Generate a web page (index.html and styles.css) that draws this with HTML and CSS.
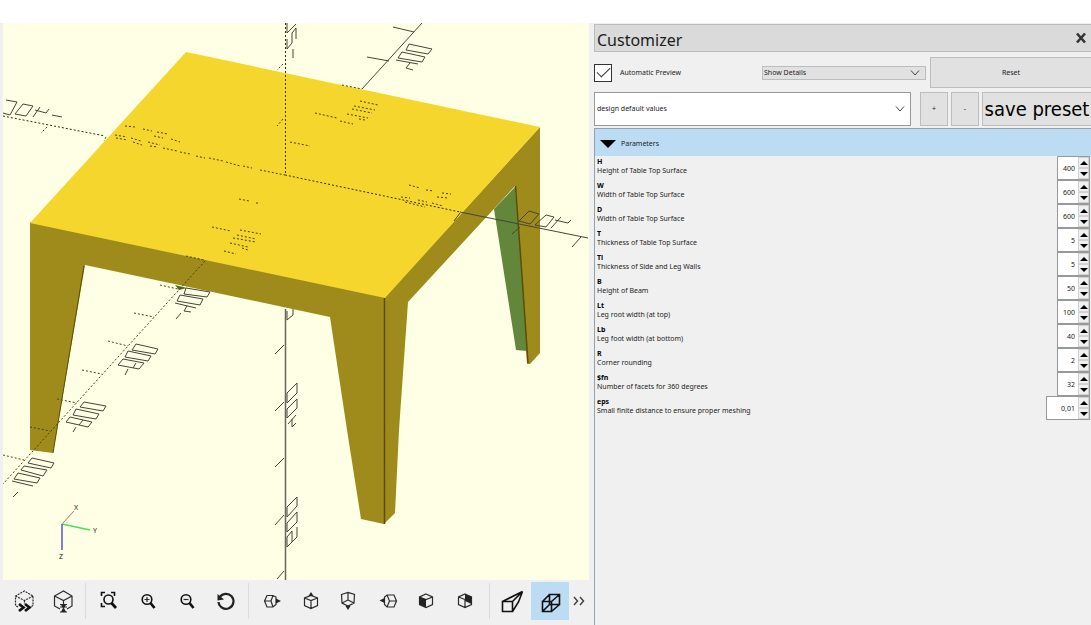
FILE: index.html
```
<!DOCTYPE html>
<html lang="en">
<head>
<meta charset="utf-8">
<title>Customizer</title>
<link rel="stylesheet" href="styles.css">
</head>
<body>
<main class="window">
  <section class="viewer" aria-label="3D view">
    <svg class="scene" viewBox="3 23 586 557" preserveAspectRatio="xMinYMin slice" role="img" aria-label="Table model">
      <rect class="sky" x="3" y="23" width="2000" height="2000"/>
      <!-- table faces -->
      <path class="olive" d="M30 222 385 297 540 127V353L530 364H527L515 186 408 302 399 430 395 513 384 524 361 519 347 430 330 317 85 265 53 453 30 450Z"/>
      <path class="green" d="M494 209 515 187 522 269 527 351 516 350Z"/>
      <path class="yellow" d="M186 52 540 127 385 298 30 223Z"/>
      <path class="edge" d="M384.500 298V524M515.500 186 521.500 269 528 363"/>
      <path class="edge thin" d="M84 266 53 453"/>
      <path class="spot" d="M175 285 187 288 179 290Z"/>
      <!-- axes -->
      <path class="axis" d="M285.500 309V580"/>
      <path class="line" d="M422 23 362 89M460 212 588 238"/>
      <path class="dots strong" d="M285.500 23V175M3 116 105 136M285 175 460 212"/>
      <path class="dots" d="M205 261 3 484M186 256 204 260M160 285 178 289M134 313 154 317M108 341 128 346M82 370 102 374M57 399 77 403M30 427 50 431M3 455 24 460M283 64 277 70M283 119 277 126M47 127 41 133M106 137 104 141"/>
      <!-- hidden scale marks on the table top -->
      <path class="dots" d="M125 126 135 127M143 129 152 131M157 132 168 134M154 136 163 138M171 139 180 142M115 135 127 137M131 138 141 141M148 142 160 145M116 138 127 140M133 142 142 145M150 146 158 147M163 148 177 151M180 152 190 154M196 156 205 158M209 158 223 161M226 162 240 166M243 166 252 168M260 170 285 175M239 199 249 201M256 203 258 203"/>
      <path class="dots" d="M342 85 362 89M360 101 378 105M354 106 375 110M352 109 372 113M347 114 368 118M359 119 365 120M315 113 337 118M340 121 353 124M290 142 310 146M409 185 420 188M426 190 434 191M442 193 451 194M437 197 448 198M401 197 410 198M418 200 427 202M432 203 443 206M405 202 425 207"/>
      <path class="dots" d="M212 227 231 231M240 230 261 234M237 235 256 239M233 238 256 242M230 243 248 247M242 248 248 250M224 251 236 254"/>
      <!-- scale ticks -->
      <path class="line" d="M393 27 414 32M367 57 389 61M520 227 512 234M581 237 572 247M460 213 454 221M284 345 275 354M284 402 275 411M284 458 275 467M284 515 275 525M284 571 277 579"/>
      <!-- scale marks -->
      <path class="line" d="M409 44 432 49 428 54 406 50ZM402 52 425 57 422 62 398 58ZM396 60 418 64M410 63 406 68 413 70"/>
      <path class="line" d="M529 211 539 214 530 224 519 221ZM546 215 554 217 546 227 535 225ZM561 217 551 228M555 220 568 223 571 220"/>
      <path class="line" d="M287 23V33L296 24M287 39V49L292 43V33L296 28V39M293 49V58"/>
      <path class="line" d="M6 100 17 102 10 115 3 113M23 104 33 106 26 116 15 114ZM40 107 33 117M35 110 46 113 49 109M52 115 62 117"/>
      <path class="line" d="M186 288 210 292 207 297 184 294ZM180 295 203 299 200 305 177 301ZM175 303 196 308M187 306 184 311 191 312M181 313 176 319"/>
      <path class="line" d="M136 344 158 349 155 354 132 350ZM128 351 151 356 148 361 125 357ZM123 359 144 363 139 369 118 365ZM136 363 133 368M128 369 125 375"/>
      <path class="line" d="M84 402 106 406 103 411 80 407ZM76 409 99 414 96 419 73 415ZM70 417 92 422 88 427 66 422ZM83 420 79 425M76 427 73 432"/>
      <path class="line" d="M32 458 54 463 51 468 28 463ZM24 466 47 470 43 476 21 470ZM18 473 40 478 37 483 14 479ZM12 481 33 486M18 492 13 497"/>
      <path class="line" d="M287 311V320L293 315V309M297 383V393L287 403V393ZM297 399V408L287 418V409ZM296 415 288 424M292 419V427L296 423"/>
      <path class="line" d="M297 497V506L287 517V507ZM297 512V522L287 532V523ZM287 537 292 531V542L287 547ZM292 542 297 537V527"/>
      <!-- orientation marker -->
      <path class="mx" d="M62 524 74 511"/>
      <path class="my" d="M62 524 90 530"/>
      <path class="mz" d="M62 524V550"/>
      <text class="mark" x="76" y="510">X</text>
      <text class="mark" x="95" y="533">Y</text>
      <text class="mark" x="61" y="559">Z</text>
    </svg>
    <div class="toolbar" role="toolbar" aria-label="View tools">
      <button class="tool" aria-label="Preview"><svg viewBox="0 0 26 26"><path stroke-dasharray="2 1" d="M7 19 4.500 17.500V8L13.500 3 22 8V17.500L19 19.500M4.500 8 13.500 12.500 22 8M13.500 12.500V16"/><path class="heavy" d="M8 16 12.500 19.500 8 23M14 16 18.500 19.500 14 23"/></svg></button>
      <button class="tool" aria-label="Render"><svg viewBox="0 0 26 26"><path d="M10 21 4.500 18V8L13.500 3 22 8V18L17 21M4.500 8 13.500 12.500 22 8M13.500 12.500V17"/><path d="M10 16.500H17M10 19H17M10 24H17"/><path class="fill" d="M11 17H16L14 20 16 24H11L13 20Z"/></svg></button>
      <span class="sep"></span>
      <button class="tool" aria-label="View all"><svg viewBox="0 0 26 26"><path class="bold" d="M5.500 8V4.500H9M15 4.500H18.500V8M5.500 15V18.500H9"/><circle class="bold" cx="12.500" cy="11.500" r="4.500"/><path class="heavy" d="M15.500 15 20 20"/></svg></button>
      <button class="tool" aria-label="Zoom in"><svg viewBox="0 0 26 26"><circle class="bold" cx="12" cy="11.500" r="4.800"/><path d="M9.500 11.500H14.500M12 9V14"/><path class="heavy" d="M15.500 15 19.500 20"/></svg></button>
      <button class="tool" aria-label="Zoom out"><svg viewBox="0 0 26 26"><circle class="bold" cx="12" cy="11.500" r="4.800"/><path d="M9.500 11.500H14.500"/><path class="heavy" d="M15.500 15 19.500 20"/></svg></button>
      <button class="tool" aria-label="Reset view"><svg viewBox="0 0 26 26"><path class="reset" d="M6.500 9.500A7.500 7.500 0 1 1 5.500 14"/><path class="fill" d="M4.500 6V12.500L11 11.500Z"/></svg></button>
      <span class="sep"></span>
      <button class="tool" aria-label="Right view"><svg viewBox="0 0 26 26"><path d="M5.500 13 8 7.500H14L17 9V16.500L14 19H8ZM5.500 13H12L14 7.500M12 13 14 19"/><path class="fill" d="M17 10.500 22 13 17 15.500Z"/></svg></button>
      <button class="tool" aria-label="Top view"><svg viewBox="0 0 26 26"><path d="M13 7.500 19.500 10V17.500L13 20.500 6.500 17.500V10ZM6.500 10 13 12.500 19.500 10M13 12.500V20.500"/><path class="fill" d="M10.500 8 13 4 15.500 8Z"/></svg></button>
      <button class="tool left" aria-label="Bottom view"><svg viewBox="0 0 26 26"><path d="M6.500 6.500 13 4.500 19.500 6.500 19 15 13 18 7 15ZM13 4.500V12L7 15M13 12 19 15"/><path class="fill" d="M10.500 18H15.500L13 22Z"/></svg></button>
      <button class="tool" aria-label="Left view"><svg viewBox="0 0 26 26"><path d="M20.500 13 18 7H11L8.500 9V16.500L11 19H18ZM20.500 13H13.500L11 7M13.500 13 11 19"/><path class="fill" d="M8.500 10 3.500 12.500 8.500 15Z"/></svg></button>
      <button class="tool left" aria-label="Front view"><svg viewBox="0 0 26 26"><path d="M13 6 19.500 9V16.500L13 19.500 6.500 16.500V9ZM6.500 9 13 11.500 19.500 9"/><path class="fill" d="M6.500 9 13 11.500V19.500L6.500 16.500Z"/></svg></button>
      <button class="tool left" aria-label="Back view"><svg viewBox="0 0 26 26"><path d="M13 6 19.500 9V16.500L13 19.500 6.500 16.500V9ZM6.500 9 13 11.500M13 19.500V11.500"/><path class="fill" d="M13 6 19.500 9V16L13 13Z"/></svg></button>
      <span class="sep"></span>
      <button class="tool wide" aria-label="Perspective"><svg viewBox="0 0 26 26"><path class="bold" d="M3.500 13.500H13.500V23.500H3.500ZM3.500 13.500 23.500 3.500 13.500 13.500M13.500 23.500 19.500 14 23.500 3.500"/></svg></button>
      <button class="tool wide on" aria-label="Orthogonal" aria-pressed="true"><svg viewBox="0 0 26 26"><path class="bold" d="M5.500 13.500H14.500V23.500H5.500ZM12.500 6.500H22.500V16.500H12.500ZM5.500 13.500 12.500 6.500M14.500 13.500 22.500 6.500M5.500 23.500 12.500 16.500M14.500 23.500 22.500 16.500"/></svg></button>
      <button class="more" aria-label="More tools"><svg viewBox="0 0 12 12"><path d="M1 2 4.500 6 1 10M7 2 10.500 6 7 10"/></svg></button>
    </div>
  </section>
  <section class="panel">
    <header class="title"><h1>Customizer</h1><button class="close" aria-label="Close"><svg viewBox="0 0 12 12"><path d="M2 1.500 10 10.500M10 1.500 2 10.500"/></svg></button></header>
    <div class="options">
      <label class="auto"><input type="checkbox" checked><span>Automatic Preview</span></label>
      <span class="drop small"><select aria-label="Detail level"><option>Show Details</option></select><svg viewBox="0 0 12 8"><path d="M2 1.500 6 6 10 1.500"/></svg></span>
      <button class="btn">Reset</button>
    </div>
    <div class="presets">
      <span class="drop big"><select aria-label="Preset"><option>design default values</option></select><svg viewBox="0 0 12 8"><path d="M2 1.500 6 6 10 1.500"/></svg></span>
      <button class="btn sq" aria-label="Add preset">+</button>
      <button class="btn sq" aria-label="Remove preset">-</button>
      <button class="btn save">save preset</button>
    </div>
    <div class="params">
      <button class="group" aria-expanded="true"><svg viewBox="0 0 16 8"><path d="M0 0H16L8 8Z"/></svg>Parameters</button>
      <div class="row"><label for="h"><b>H</b>Height of Table Top Surface</label><span class="spin"><input id="h" value="400"><span class="steps"><button aria-label="Increase H"></button><button aria-label="Decrease H"></button></span></span></div>
      <div class="row"><label for="w"><b>W</b>Width of Table Top Surface</label><span class="spin"><input id="w" value="600"><span class="steps"><button aria-label="Increase W"></button><button aria-label="Decrease W"></button></span></span></div>
      <div class="row"><label for="d"><b>D</b>Width of Table Top Surface</label><span class="spin"><input id="d" value="600"><span class="steps"><button aria-label="Increase D"></button><button aria-label="Decrease D"></button></span></span></div>
      <div class="row"><label for="t"><b>T</b>Thickness of Table Top Surface</label><span class="spin"><input id="t" value="5"><span class="steps"><button aria-label="Increase T"></button><button aria-label="Decrease T"></button></span></span></div>
      <div class="row"><label for="tl"><b>Tl</b>Thickness of Side and Leg Walls</label><span class="spin"><input id="tl" value="5"><span class="steps"><button aria-label="Increase Tl"></button><button aria-label="Decrease Tl"></button></span></span></div>
      <div class="row"><label for="b"><b>B</b>Height of Beam</label><span class="spin"><input id="b" value="50"><span class="steps"><button aria-label="Increase B"></button><button aria-label="Decrease B"></button></span></span></div>
      <div class="row"><label for="lt"><b>Lt</b>Leg root width (at top)</label><span class="spin"><input id="lt" value="100"><span class="steps"><button aria-label="Increase Lt"></button><button aria-label="Decrease Lt"></button></span></span></div>
      <div class="row"><label for="lb"><b>Lb</b>Leg foot width (at bottom)</label><span class="spin"><input id="lb" value="40"><span class="steps"><button aria-label="Increase Lb"></button><button aria-label="Decrease Lb"></button></span></span></div>
      <div class="row"><label for="r"><b>R</b>Corner rounding</label><span class="spin"><input id="r" value="2"><span class="steps"><button aria-label="Increase R"></button><button aria-label="Decrease R"></button></span></span></div>
      <div class="row"><label for="fn"><b>$fn</b>Number of facets for 360 degrees</label><span class="spin"><input id="fn" value="32"><span class="steps"><button aria-label="Increase $fn"></button><button aria-label="Decrease $fn"></button></span></span></div>
      <div class="row"><label for="eps"><b>eps</b>Small finite distance to ensure proper meshing</label><span class="spin long"><input id="eps" value="0,01"><span class="steps"><button aria-label="Increase eps"></button><button aria-label="Decrease eps"></button></span></span></div>
    </div>
  </section>
</main>
</body>
</html>
```
FILE: styles.css
```
* { box-sizing: border-box; }
body {
  margin: 0;
  background: #fff;
  color: #1c1c1c;
  font: 7px/10px "Noto Sans", "Open Sans", sans-serif;
}
button, input, select { font: inherit; color: inherit; margin: 0; padding: 0; border-radius: 0; }
.window {
  display: grid;
  grid-template-columns: minmax(0, 589fr) minmax(0, 502fr);
  min-height: 100vh;
  padding-top: 23px;
  background: linear-gradient(#fff 23px, #f0f0f0 23px);
}

/* 3D view */
.viewer { display: flex; flex-direction: column; padding-left: 3px; }
.scene { display: block; flex: 1 1 0; min-height: 0; width: 100%; }
.scene path { fill: none; }
.sky { fill: #ffffe5; }
.scene .yellow { fill: #f4d62c; }
.scene .olive { fill: #9e8b1c; }
.scene .green { fill: #62863a; }
.scene .spot { fill: #4c6b22; }
.edge { stroke: #5d4d08; stroke-width: 1.5; }
.thin { stroke-width: 1; }
.axis { stroke: #66665c; stroke-width: 1.5; }
.line { stroke: #45453a; stroke-width: 1; }
.dots { stroke: #4a4210; stroke-width: 1; stroke-dasharray: 2 2; }
.strong { stroke: #332d08; }
.mx { stroke: #c07060; }
.my { stroke: #4be05a; stroke-width: 1.5; }
.mz { stroke: #5a50d8; stroke-width: 1.5; }
.mark { font-size: 7px; text-anchor: middle; fill: #222; }

/* toolbar */
.toolbar { display: flex; align-items: center; height: 45px; padding: 0 0 4px 1px; }
.tool, .more { display: grid; place-items: center; flex: none; width: 39px; height: 38px; border: 0; background: none; }
.tool svg { width: 26px; height: 26px; fill: none; stroke: #2b2b2b; stroke-width: 1.2; }
.tool.left { justify-content: start; padding-left: 5px; }
.tool.wide { width: 38px; }
.tool.on { background: #bcdcf4; }
.tool .bold { stroke: #111; stroke-width: 1.6; }
.tool .heavy { stroke: #111; stroke-width: 2.7; }
.tool .reset { stroke: #222; stroke-width: 2.2; }
.tool .fill { fill: #222; stroke: none; }
.sep { flex: none; width: 1px; height: 36px; margin: 0 3px; background: #dcdcdc; }
.more { width: 20px; }
.more svg { width: 12px; height: 12px; fill: none; stroke: #444; stroke-width: 1.5; }

/* panel */
.panel { padding: 1px 0 0 5px; min-width: 0; }
.title {
  display: flex;
  align-items: center;
  justify-content: space-between;
  height: 28px;
  padding: 0 4px 0 2px;
  border: 1px solid #bdbdbd;
  border-right: 0;
  background: #dadada;
}
.title h1 { margin: 0; padding-top: 3px; font-size: 16px; line-height: 24px; font-weight: 400; }
.close { display: grid; place-items: center; width: 12px; height: 12px; border: 0; background: none; }
.close svg { width: 12px; height: 12px; stroke: #333; stroke-width: 2.6; }
.options {
  display: grid;
  grid-template-columns: 164fr 164fr 161fr;
  gap: 4px;
  align-items: center;
  height: 31px;
  margin-top: 5px;
}
.auto { display: flex; align-items: center; gap: 8px; }
.auto input {
  appearance: none;
  width: 18px;
  height: 18px;
  border: 1px solid #333;
  outline: 0;
  background: #fff;
  display: grid;
  place-items: center;
}
.auto input:checked::before {
  content: "";
  width: 12px;
  height: 6px;
  margin-bottom: 5px;
  border: solid #333;
  border-width: 0 0 1px 1px;
  transform: rotate(-45deg);
}
.drop { display: grid; grid-template-columns: minmax(0, 1fr); align-items: center; min-width: 0; }
.drop select { grid-area: 1 / 1; appearance: none; width: 100%; padding: 0 1px; border: 1px solid #bdbdbd; background: #e1e1e1; }
.drop svg { grid-area: 1 / 1; justify-self: end; width: 12px; height: 8px; margin-right: 5px; fill: none; stroke: #444; pointer-events: none; }
.small select { height: 14px; }
.big { flex: 1; }
.drop.big select { height: 34px; padding: 0 2px; background: #fff; border-color: #999; }
.btn { border: 1px solid #bdbdbd; background: #e1e1e1; text-align: center; }
.options .btn { height: 31px; border-right: 0; }
.presets { display: flex; margin-top: 4px; gap: 3px; }
.sq { flex: none; width: 28px; height: 34px; }
.big + .sq { margin-left: 6px; }
.save {
  flex: none;
  width: 109px;
  height: 34px;
  border-right: 0;
  font-family: "DejaVu Sans Condensed", "DejaVu Sans", sans-serif;
  font-size: 20px;
  white-space: nowrap;
  color: #000;
}
.params { margin-top: 2px; border: 1px solid #8fa0b0; border-width: 1px 0 0 1px; min-height: 497px; }
.group { display: flex; align-items: center; gap: 5px; width: 100%; height: 27px; padding: 2px 5px 0; border: 0; background: #bcdcf4; text-align: left; }
.group svg { width: 16px; height: 8px; fill: #000; }
.row { display: flex; justify-content: space-between; height: 24px; }
.row label { padding: 1px 0 0 2px; line-height: 9px; }
.row b { display: block; color: #000; }
.spin { display: flex; width: 33px; height: 24px; margin-right: 1px; border: 1px solid #999; background: #fff; }
.spin.long { width: 44px; }
.spin input { flex: 1; min-width: 0; padding: 1px 3px 0 0; border: 0; background: none; text-align: right; outline: 0; }
.steps { display: grid; grid-template-rows: 1fr 1fr; width: 11px; background: #e6e6e6; }
.steps button { display: grid; place-items: center; border: 1px solid #d2d2d2; background: #f0f0f0; }
.steps button::before { content: ""; border: solid transparent; border-width: 0 4px 4px; border-bottom-color: #000; }
.steps button:last-child::before { border-width: 4px 4px 0; border-top-color: #000; }
```
